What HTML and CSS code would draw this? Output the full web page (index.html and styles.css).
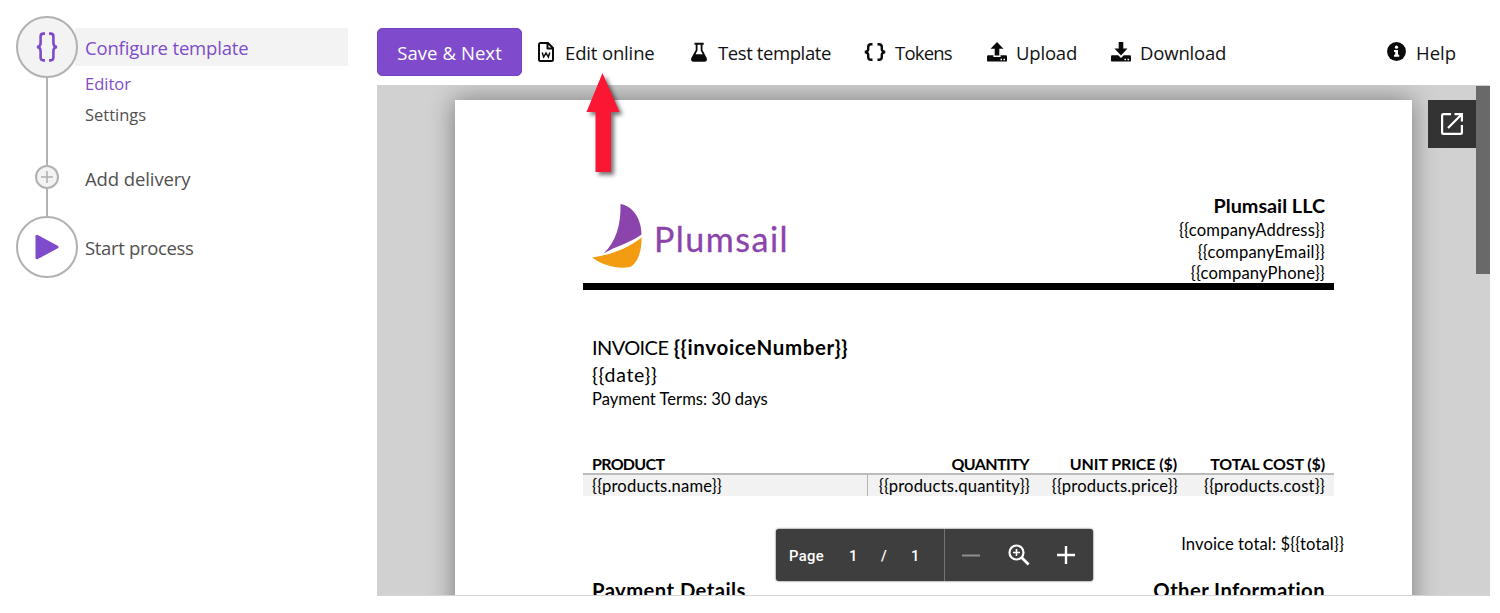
FILE: index.html
```html
<!DOCTYPE html>
<html lang="en">
<head>
<meta charset="utf-8">
<title>Configure template</title>
<link rel="stylesheet" href="styles.css">
</head>
<body>
<div class="app">
  <nav class="steps">
    <div class="step step-config">
      <div class="circle circle-active">
        <svg width="24" height="32" viewBox="0 0 24 32" fill="none" stroke="#7f4bcc" stroke-width="2.6"><path d="M10 2.6H8.4Q5.6 2.6 5.6 5.4V12Q5.6 15.6 2 16Q5.6 16.4 5.6 20V26.6Q5.6 29.4 8.4 29.4H10M14 2.6h1.600Q18.400 2.600 18.400 5.400V12Q18.400 15.600 22 16Q18.400 16.400 18.400 20V26.600Q18.400 29.400 15.600 29.400H14"/></svg>
      </div>
      <div class="step-title active"><span class="t-config">Configure template</span></div>
    </div>
    <div class="substeps">
      <div class="rail rail-long"></div>
      <div class="links"><a class="link active t-editor">Editor</a><a class="link t-settings">Settings</a></div>
    </div>
    <div class="step step-delivery">
      <div class="small-circle"><svg width="12" height="12" viewBox="0 0 12 12" stroke="#aeaeae" stroke-width="1.500"><path d="M6 0v12M0 6h12"/></svg></div>
      <span class="label t-add">Add delivery</span>
    </div>
    <div class="rail rail-short"></div>
    <div class="step step-start">
      <div class="circle"><svg width="24" height="26" viewBox="0 0 24 26"><path d="M2 2.200V23.800L22 13z" fill="#7f4bcc" stroke="#7f4bcc" stroke-width="3" stroke-linejoin="round"/></svg></div>
      <span class="label t-start">Start process</span>
    </div>
  </nav>

  <main class="main">
    <div class="toolbar">
      <button class="save"><span class="t-save">Save &amp; Next</span></button>
      <div class="tool tool-edit">
        <svg width="16" height="20" viewBox="0 0 16 20" fill="none" stroke="#0b0b0b" stroke-width="2"><path d="M2.500 1H10l5 5v11.500Q15 19 13.500 19H2.500Q1 19 1 17.500V2.500Q1 1 2.500 1zM9.500 1v5.500H15" stroke-linejoin="round"/><path d="M4.200 10.500l1.500 4.500L8 11l2.300 4 1.500-4.500" stroke-width="1.500"/></svg>
        <span class="t-edit">Edit online</span>
      </div>
      <div class="tool tool-test">
        <svg width="16" height="20" viewBox="0 0 16 20" fill="#0b0b0b"><path fill-rule="evenodd" d="M3.500 .8h9.200v2h-1.200V8l4.300 8.300Q16.500 19.700 14 19.700H2Q-.5 19.700 .2 16.300L4.700 8V2.800H3.500zM6.500 2.800V8.500L4.500 12.300h7.200L9.700 8.500V2.800z"/></svg>
        <span class="t-test">Test template</span>
      </div>
      <div class="tool tool-tokens">
        <svg width="22" height="18" viewBox="0 0 22 18" fill="none" stroke="#0b0b0b" stroke-width="2.400"><path d="M8.500 1.300H7Q4.200 1.300 4.200 4v2.200Q4.200 8.300 1 9q3.200.7 3.200 2.800V14Q4.200 16.700 7 16.700h1.500M13.500 1.300H15Q17.800 1.300 17.800 4v2.200Q17.800 8.300 21 9q-3.200.7-3.200 2.800V14Q17.800 16.700 15 16.700h-1.500"/></svg>
        <span class="t-tokens">Tokens</span>
      </div>
      <div class="tool tool-upload">
        <svg width="20" height="20" viewBox="0 0 20 20" fill="#0b0b0b"><path d="M10 0l6.500 6.800h-4.200v6.700H7.700V6.800H3.500z"/><path fill-rule="evenodd" d="M1.200 13.200h5.200V15h7.200v-1.800h5.200Q20 13.200 20 14.400v4Q20 19.600 18.800 19.600H1.200Q0 19.600 0 18.400v-4Q0 13.200 1.200 13.200zM13.500 16.700v1.500H15v-1.500zM16.500 16.700v1.500H18v-1.500z"/></svg>
        <span class="t-upload">Upload</span>
      </div>
      <div class="tool tool-download">
        <svg width="20" height="20" viewBox="0 0 20 20" fill="#0b0b0b"><path d="M7.700 0h4.600v6.500h4.200L10 13.500 3.500 6.500h4.200z"/><path fill-rule="evenodd" d="M1.200 13.200h6L10 16l2.800-2.800h6Q20 13.200 20 14.400v4Q20 19.600 18.800 19.600H1.200Q0 19.600 0 18.400v-4Q0 13.200 1.200 13.200zM13.500 16.700v1.500H15v-1.500zM16.500 16.700v1.500H18v-1.500z"/></svg>
        <span class="t-download">Download</span>
      </div>
      <div class="tool tool-help">
        <svg width="19" height="19" viewBox="0 0 19 19"><circle cx="9.500" cy="9.500" r="9.400" fill="#0b0b0b"/><circle cx="9.500" cy="5.200" r="1.600" fill="#fff"/><path d="M7 8h4v4.800h1.200v2H7v-2h1.200V10H7z" fill="#fff"/></svg>
        <span class="t-help">Help</span>
      </div>
      <svg class="arrow" width="50" height="120" viewBox="0 0 50 120"><path d="M25.500 8L42.500 47H34V107H18.500V47H9.500z" fill="#fb1733"/></svg>
    </div>

    <div class="viewer">
      <article class="page">
        <header class="doc-head">
          <div class="logo">
            <svg width="50" height="66" viewBox="0 0 50 66"><path d="M28.500 1C41 3 49.500 16 49.500 31.500 38 40 24 43 11.500 50.500 24 39 29 22 28.500 1z" fill="#8c44ad"/><path d="M0 54.500C18 52 35 46 49.500 34.500 50 48 45.500 60 38.500 63.800 27 66.500 12 63 0 54.500z" fill="#f39c12"/></svg>
            <span class="logo-text">Plumsail</span>
          </div>
          <div class="company">
            <strong class="company-name">Plumsail LLC</strong>
            <span>{{companyAddress}}</span>
            <span>{{companyEmail}}</span>
            <span>{{companyPhone}}</span>
          </div>
        </header>
        <section class="invoice">
          <div class="inv-number"><span class="t-inv">INVOICE</span> <strong class="t-num">{{invoiceNumber}}</strong></div>
          <div class="inv-date">{{date}}</div>
          <div class="inv-terms">Payment Terms: 30 days</div>
        </section>
        <section class="products">
          <div class="row head"><span class="h-product">PRODUCT</span><span class="h-qty">QUANTITY</span><span class="h-price">UNIT PRICE ($)</span><span class="h-cost">TOTAL COST ($)</span></div>
          <div class="row body"><span class="name">{{products.name}}</span><span>{{products.quantity}}</span><span>{{products.price}}</span><span>{{products.cost}}</span></div>
        </section>
        <div class="total">Invoice total: ${{total}}</div>
        <footer class="details"><strong>Payment Details</strong><strong>Other Information</strong></footer>
      </article>
      <div class="popout"><svg width="24" height="24" viewBox="0 0 24 24" fill="none" stroke="#fff" stroke-width="2.200"><path d="M11 2.100H3.500Q2.100 2.100 2.100 3.500v17Q2.100 21.900 3.500 21.900h17Q21.900 21.900 21.900 20.500V13M14.500 2.100h7.400V9.500M21.500 2.500L8 16"/></svg></div>
      <div class="thumb"></div>
      <div class="pager">
        <div class="pages"><span class="p-word">Page</span><span class="p-cur">1</span><span class="p-sep">/</span><span class="p-all">1</span></div>
        <div class="zooms">
          <svg width="18" height="20" viewBox="0 0 18 20"><path d="M0 10.500h18" stroke="#8f8f8f" stroke-width="2"/></svg>
          <svg width="22" height="22" viewBox="0 0 22 22" fill="none" stroke="#fff"><circle cx="8.500" cy="8.500" r="7" stroke-width="2.200"/><path d="M13.600 13.600l7 7" stroke-width="2.800"/><path d="M8.500 5v7M5 8.500h7" stroke-width="1.600"/></svg>
          <svg width="18" height="20" viewBox="0 0 18 20"><path d="M0 10h18M9 1v18" stroke="#fff" stroke-width="2.400"/></svg>
        </div>
      </div>
    </div>
  </main>
</div>
</body>
</html>
```
FILE: styles.css
```css
* { box-sizing: border-box; }
body { margin: 0; background: #fff; overflow: hidden; font-family: "Open Sans", "Noto Sans", sans-serif; }
svg { display: block; flex: none; }
span, strong, a { white-space: nowrap; }
.app { display: flex; width: 1500px; height: 613px; }

.steps { width: 377px; padding: 16px 29px 0 16px; color: #505050; font-size: 18.5px; }
.step { display: flex; align-items: center; }
.circle { width: 62px; height: 62px; border: 2px solid #b1b1b1; border-radius: 50%; display: flex; align-items: center; justify-content: center; flex: none; background: #fff; }
.circle-active { background: #f3f3f3; z-index: 1; }
.step-title { background: #f3f3f3; flex: 1; height: 38px; margin-left: -3px; padding-left: 10px; line-height: 39px; }
.active { color: #7f4bcc; }
.t-config { letter-spacing: -.17px; }
.substeps { display: flex; height: 87px; }
.rail { width: 2px; background: #b1b1b1; margin-left: 30px; }
.links { display: flex; flex-direction: column; padding: 0 0 0 37px; font-size: 16.5px; line-height: 31px; margin-top: -10px; }
.step-delivery { height: 24px; padding-left: 19px; }
.small-circle { width: 24px; height: 24px; border: 2px solid #b1b1b1; border-radius: 50%; background: #f3f3f3; display: flex; align-items: center; justify-content: center; }
.step-delivery .label { margin: 2px 0 0 26px; letter-spacing: -.1px; }
.rail-short { height: 26.5px; }
.step-start .label { margin: 1px 0 0 7px; letter-spacing: -.34px; }

.main { width: 1113px; }
.toolbar { position: relative; z-index: 3; display: flex; align-items: center; height: 85px; padding-top: 18px; font-size: 18.5px; color: #111; }
.tool span { padding-top: 1px; }
.save { width: 145px; height: 48px; border: 1px solid #7442c0; border-radius: 5px; background: #7f4bcc; color: #fff; font: inherit; padding: 1px 0 0; margin-right: 16px; letter-spacing: .08px; }
.tool { display: flex; align-items: center; height: 48px; }
.tool-edit { width: 153px; gap: 11px; letter-spacing: -.15px; }
.tool-test { width: 173px; gap: 11px; letter-spacing: -.4px; }
.tool-tokens { width: 123px; gap: 9px; letter-spacing: -.8px; }
.tool-upload { width: 124px; gap: 9px; letter-spacing: -.2px; }
.tool-download { gap: 9px; letter-spacing: -.17px; }
.tool-help { margin-left: auto; width: 103px; gap: 10px; }
.arrow { position: absolute; left: 200px; top: 65px; filter: drop-shadow(3px 3px 2px rgba(0,0,0,.55)); }

.viewer { position: relative; height: 511px; background: #d1d1d1; border-bottom: 1px solid #d5d5d5; overflow: hidden; padding: 15px 78px 0; }
.page { width: 957px; height: 700px; background: #fff; box-shadow: 0 0 24px rgba(0,0,0,.42); font-family: Lato, sans-serif; color: #000; font-size: 16.6px; letter-spacing: .18px; padding: 94px 78px 0 128px; }
.doc-head { display: flex; justify-content: space-between; height: 96px; border-bottom: 7px solid #000; padding: 0 9px; }
.logo { display: flex; padding-top: 9px; }
.logo-text { color: #8c44ad; font-size: 34px; line-height: 40px; letter-spacing: 1.5px; -webkit-text-stroke: .3px #8c44ad; margin: 16px 0 0 12px; }
.company { display: flex; flex-direction: column; align-items: flex-end; line-height: 21.500px; }
.company-name { font-size: 19.800px; line-height: 23px; margin-bottom: 3px; letter-spacing: 0; }
.invoice { padding: 43px 9px 0; }
.inv-number { font-size: 20px; line-height: 28px; }
.t-inv { letter-spacing: -.6px; }
.t-num { font-size: 20.500px; letter-spacing: .65px; }
.inv-date { font-size: 19.500px; line-height: 28px; letter-spacing: .7px; }
.inv-terms { line-height: 20px; letter-spacing: 0; }
.products { padding-top: 44px; }
.row { display: grid; grid-template-columns: 285px 171px 148px 147px; text-align: right; }
.row span { padding-right: 9px; }
.row span:first-child { text-align: left; padding-left: 9px; }
.head { font-size: 16px; font-weight: 700; line-height: 20px; padding-top: 1px; height: 22px; border-bottom: 2px solid #bcbcbc; }
.head .h-product { letter-spacing: -.7px; }
.head .h-qty { letter-spacing: -.6px; padding-right: 10px; }
.head .h-price { letter-spacing: -.1px; padding-right: 10px; }
.head .h-cost { letter-spacing: -.1px; }
.body { background: #f2f2f2; height: 21px; line-height: 23px; }
.body .name { height: 21px; border-right: 1px solid #b4b4b4; }
.total { text-align: right; margin: 38px -10px 0 0; line-height: 20px; letter-spacing: .1px; }
.details { display: flex; justify-content: space-between; padding: 22px 9px 0; font-size: 20.300px; line-height: 28px; letter-spacing: .42px; }

.popout { position: absolute; left: 1051px; top: 15px; width: 48px; height: 48px; background: #333; display: flex; align-items: center; justify-content: center; }
.thumb { position: absolute; right: 0; top: 1px; width: 14px; height: 188px; background: #696969; }
.pager { position: absolute; left: 399px; top: 444px; width: 317px; height: 52px; background: #3e3e3e; border-radius: 3px; display: flex; color: #fff; font: 500 14.800px Roboto, sans-serif; box-shadow: 0 0 2px #333; }
.pages { width: 169px; border-right: 1px solid #737373; display: flex; align-items: center; padding: 2px 0 0 13px; }
.p-word { width: 60px; letter-spacing: .3px; }
.p-cur { width: 32px; }
.p-sep { width: 30px; }
.zooms { flex: 1; display: flex; align-items: center; justify-content: space-between; padding: 0 18px 0 17px; }
```
